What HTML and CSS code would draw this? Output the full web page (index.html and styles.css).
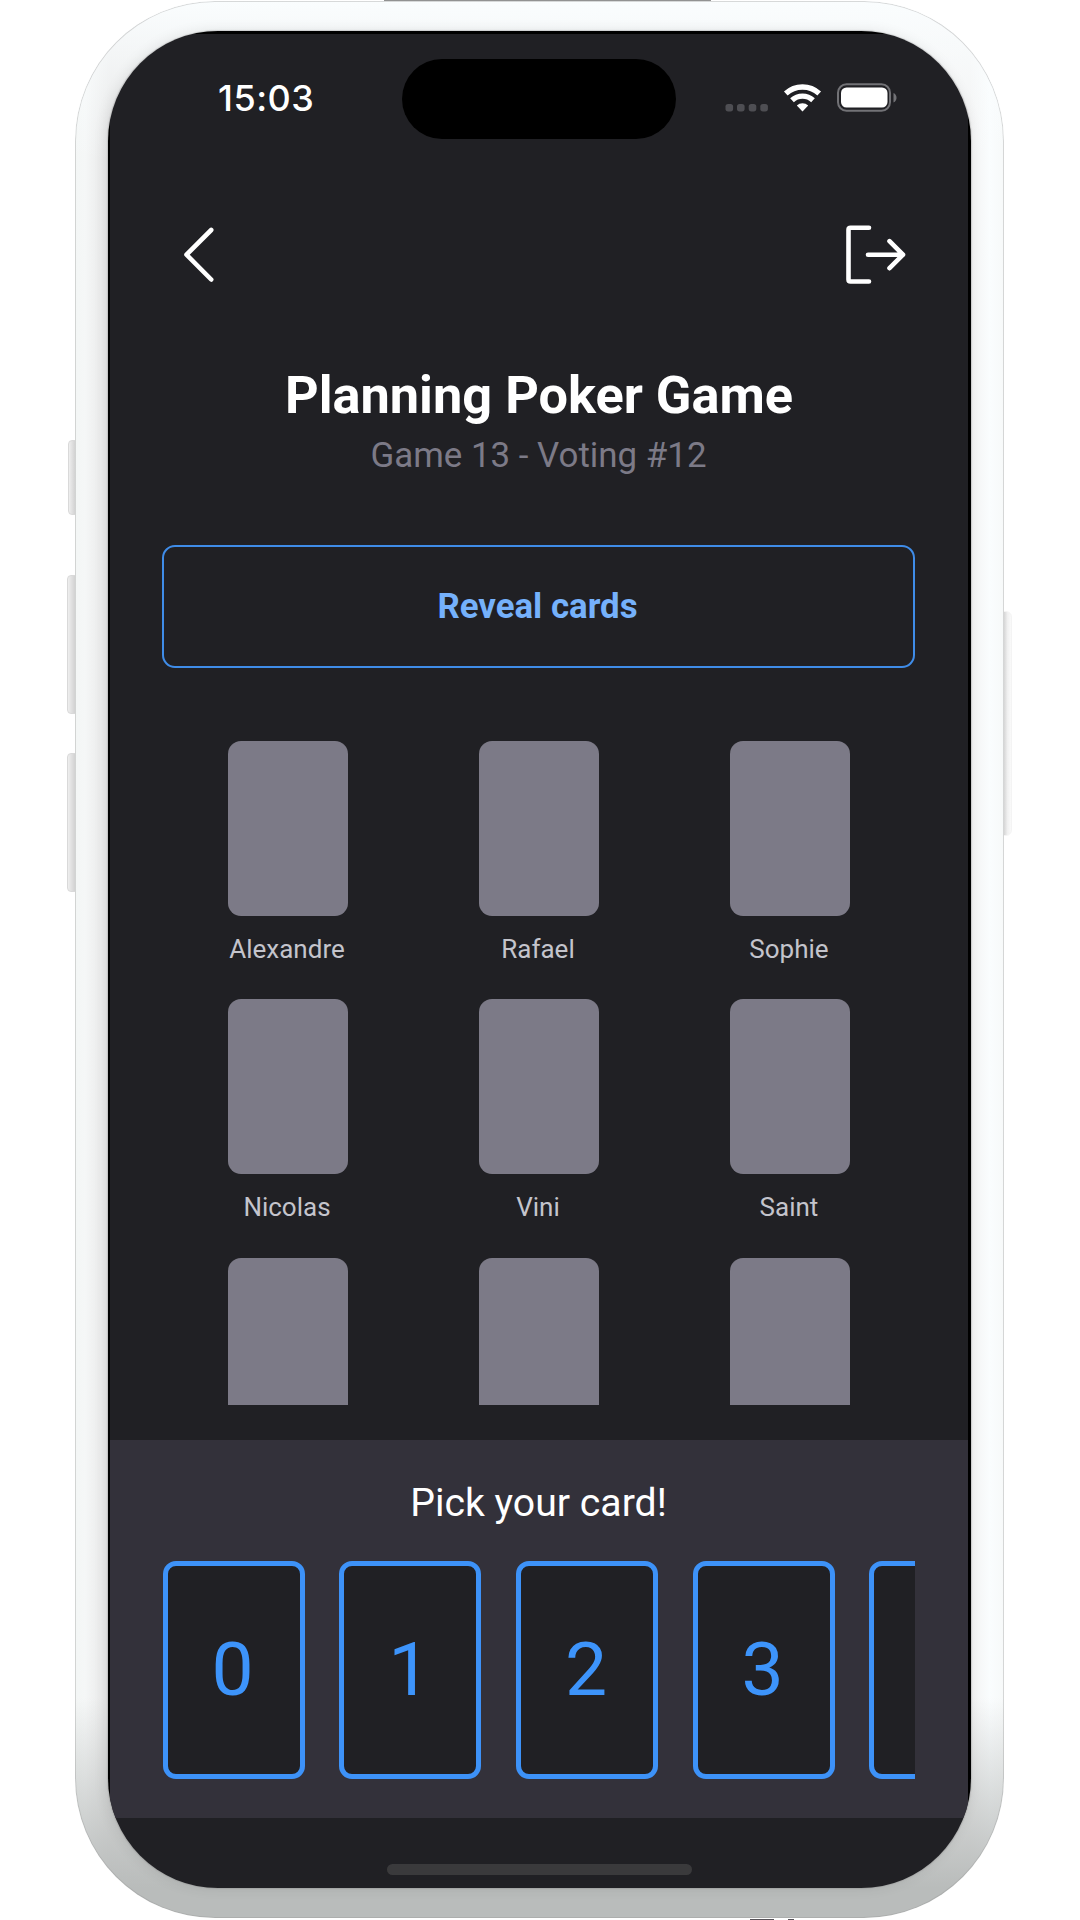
FILE: index.html
```html
<!DOCTYPE html>
<html lang="en">
<head>
<meta charset="utf-8">
<title>Planning Poker Game</title>
<link rel="stylesheet" href="styles.css">
</head>
<body>
<div class="stage">
  <i class="edge edge-top"></i>
  <i class="edge edge-bottom-a"></i>
  <i class="edge edge-bottom-b"></i>
  <i class="key key-silent"></i>
  <i class="key key-up"></i>
  <i class="key key-down"></i>
  <i class="key key-power"></i>
  <div class="phone">
    <main class="screen">
      <header class="status">
        <span class="time">15:03</span>
        <span class="island"></span>
        <svg class="indicators" viewBox="0 0 174 32" width="174" height="32">
          <g fill="#4e4e53">
            <rect x="0.5" y="22" width="7.6" height="7.4" rx="2.6"/>
            <rect x="12" y="22" width="7.6" height="7.4" rx="2.6"/>
            <rect x="23.7" y="22" width="7.6" height="7.4" rx="2.6"/>
            <rect x="35.3" y="22" width="7.6" height="7.4" rx="2.6"/>
          </g>
          <g fill="none" stroke="#fff" stroke-width="5.4">
            <path d="M60.800 11.600a24.600 24.600 0 0 1 33.400 0"/>
            <path d="M67 18.200a15.500 15.500 0 0 1 21 0"/>
          </g>
          <path d="M71.800 23.400a8.500 8.500 0 0 1 11.400 0L77.500 29.500z" fill="#fff"/>
          <rect x="113" y="2.200" width="52" height="26.600" rx="8.500" fill="none" stroke="#727276" stroke-width="2"/>
          <rect x="116" y="5.500" width="46.500" height="20" rx="5.500" fill="#fff"/>
          <path d="M168.500 11c4 1.500 4 8 0 9.500z" fill="#727276"/>
        </svg>
      </header>
      <nav class="toolbar">
        <svg width="32" height="60" viewBox="0 0 32 60" class="stroke"><path d="M28.200 5 3.500 29.700 28.200 54.500"/></svg>
        <svg width="62" height="62" viewBox="0 0 62 62" class="stroke"><path d="M25 3.700H6.500Q4.500 3.700 4.500 5.700V55.500Q4.500 57.500 6.500 57.500H25M24 30.700H59M45.500 17.200 59 30.700 45.500 44.200"/></svg>
      </nav>
      <h1 class="title">Planning Poker Game</h1>
      <p class="subtitle">Game 13 - Voting #12</p>
      <button class="reveal">Reveal cards</button>
      <section class="players">
        <div class="player"><i></i><span>Alexandre</span></div>
        <div class="player"><i></i><span>Rafael</span></div>
        <div class="player"><i></i><span>Sophie</span></div>
        <div class="player"><i></i><span>Nicolas</span></div>
        <div class="player"><i></i><span>Vini</span></div>
        <div class="player"><i></i><span>Saint</span></div>
        <div class="player"><i></i></div>
        <div class="player"><i></i></div>
        <div class="player"><i></i></div>
      </section>
      <section class="picker">
        <h2>Pick your card!</h2>
        <div class="deck">
          <div class="card">0</div>
          <div class="card">1</div>
          <div class="card">2</div>
          <div class="card">3</div>
          <div class="card"></div>
        </div>
      </section>
      <footer class="home"><i></i></footer>
    </main>
  </div>
</div>
</body>
</html>
```
FILE: styles.css
```css
* { box-sizing: border-box; }
body { margin: 0; background: #fff; }
h1, h2, p { margin: 0; }

.stage {
  position: relative;
  width: 1080px;
  height: 1920px;
  overflow: hidden;
  padding: 1px 76px 0 75px;
  font-family: Roboto, sans-serif;
}

/* phone body */
.phone {
  position: relative;
  height: 1917px;
  padding: 30px 33px 30px;
  border-radius: 140px;
  background:
    linear-gradient(180deg, #fafdfe 0, rgba(250,253,254,0) 160px),
    linear-gradient(0deg, #b9bcbb 30px, rgba(190,193,192,0) 220px),
    linear-gradient(90deg, #f3f6f5, #f5f7f7 10px, #e6e6e6 34px, #f2f2f2 895px, #fafdfe 915px, #f7f9f9);
  box-shadow: inset 0 0 0 1px rgba(150,150,150,.35);
}
.key { position: absolute; border: 1px solid #d4d4d4; }
.key-silent, .key-up, .key-down {
  background: linear-gradient(90deg, #eee, #cecece);
  border-color: #d9d9d9;
  border-radius: 4px 0 0 4px;
}
.key-silent { left: 68px; top: 440px; width: 9px; height: 75px; }
.key-up { left: 67px; top: 575px; width: 10px; height: 139px; }
.key-down { left: 67px; top: 753px; width: 10px; height: 139px; }
.key-power {
  left: 1003px; top: 611px; width: 9px; height: 225px;
  border-color: #f4f4f4;
  border-radius: 0 6px 6px 0;
  background: linear-gradient(90deg, #d6d6d6, #f0f0f0 50%, #fafafa);
}
.edge { position: absolute; background: #929292; height: 1px; }
.edge-top { top: 0; left: 384px; width: 327px; }
.edge-bottom-a { top: 1919px; left: 750px; width: 24px; background: #565258; }
.edge-bottom-b { top: 1919px; left: 788px; width: 6px; background: #565258; }

/* the black bezel shows only along the straight sides */
.screen {
  height: 1857px;
  display: flex;
  flex-direction: column;
  overflow: hidden;
  padding: 3px 3px 0 2px;
  border-radius: 110px;
  background:
    linear-gradient(#000, #000) top / 100% 3px no-repeat,
    linear-gradient(#000, #000) left / 2px 100% no-repeat,
    linear-gradient(#000, #000) right / 3px 100% no-repeat,
    #202024;
  color: #fff;
  box-shadow: 0 0 1px 1px rgba(130,130,130,.3), -2px 0 14px rgba(0,0,0,.09);
}

/* status bar */
.status {
  display: grid;
  grid-template-columns: 292px 274px 1fr;
  height: 106px;
  padding-top: 25px;
}
.time {
  padding: 16px 0 0 108px;
  font: 550 36px/46px Inter, sans-serif;
  letter-spacing: .5px;
}
.island { height: 80px; border-radius: 40px; background: #000; }
.indicators { margin: 23px 0 0 49px; }

.toolbar {
  display: flex;
  justify-content: space-between;
  align-items: center;
  height: 62px;
  margin-top: 84px;
  padding: 0 62px 0 73px;
}
.stroke {
  fill: none;
  stroke: #fff;
  stroke-width: 4.6;
  stroke-linecap: round;
  stroke-linejoin: round;
}

.title {
  margin-top: 77px;
  text-align: center;
  font-size: 52.300px;
  line-height: 64px;
  font-weight: 700;
}
.subtitle {
  margin-top: 7px;
  padding-right: 1px;
  text-align: center;
  color: #7c7a87;
  font-size: 34.900px;
  line-height: 44px;
}
.reveal {
  height: 123px;
  margin: 67px 53px 0 52px;
  padding: 0 2px 2px 0;
  border: 2px solid #3f8ce8;
  border-radius: 13px;
  background: none;
  color: #75b1fb;
  font: 700 34.800px/40px Roboto, sans-serif;
}

/* player grid, cut off by the scroll area */
.players {
  display: grid;
  grid-template-columns: repeat(3, 251px);
  grid-auto-rows: 258.400px;
  height: 664px;
  margin: 73px 0 0 52px;
  overflow: hidden;
}
.player { display: flex; flex-direction: column; align-items: center; }
.player i { width: 120px; height: 175px; border-radius: 13px; background: #7c7a87; }
.player span { margin-top: 17px; padding-right: 1px; color: #c4c4cc; font-size: 26px; line-height: 32px; }

.picker {
  height: 378px;
  margin-top: 35px;
  padding: 40px 53px 0 52px;
  background: #33313a;
}
.picker h2 {
  text-align: center;
  font-size: 39.200px;
  line-height: 46px;
  font-weight: 400;
}
.deck { display: flex; gap: 34.500px; margin-top: 35px; padding-left: .5px; overflow: hidden; }
.card {
  flex: 0 0 142.200px;
  height: 218px;
  padding-right: 2px;
  border: 5px solid #3d92f8;
  border-radius: 13px;
  background: #202024;
  color: #3d94fb;
  font-size: 75px;
  line-height: 206px;
  text-align: center;
}

.home { display: flex; justify-content: center; padding: 46px 0 0; }
.home i { width: 305px; height: 11px; border-radius: 6px; background: #3a3a3c; }
```
